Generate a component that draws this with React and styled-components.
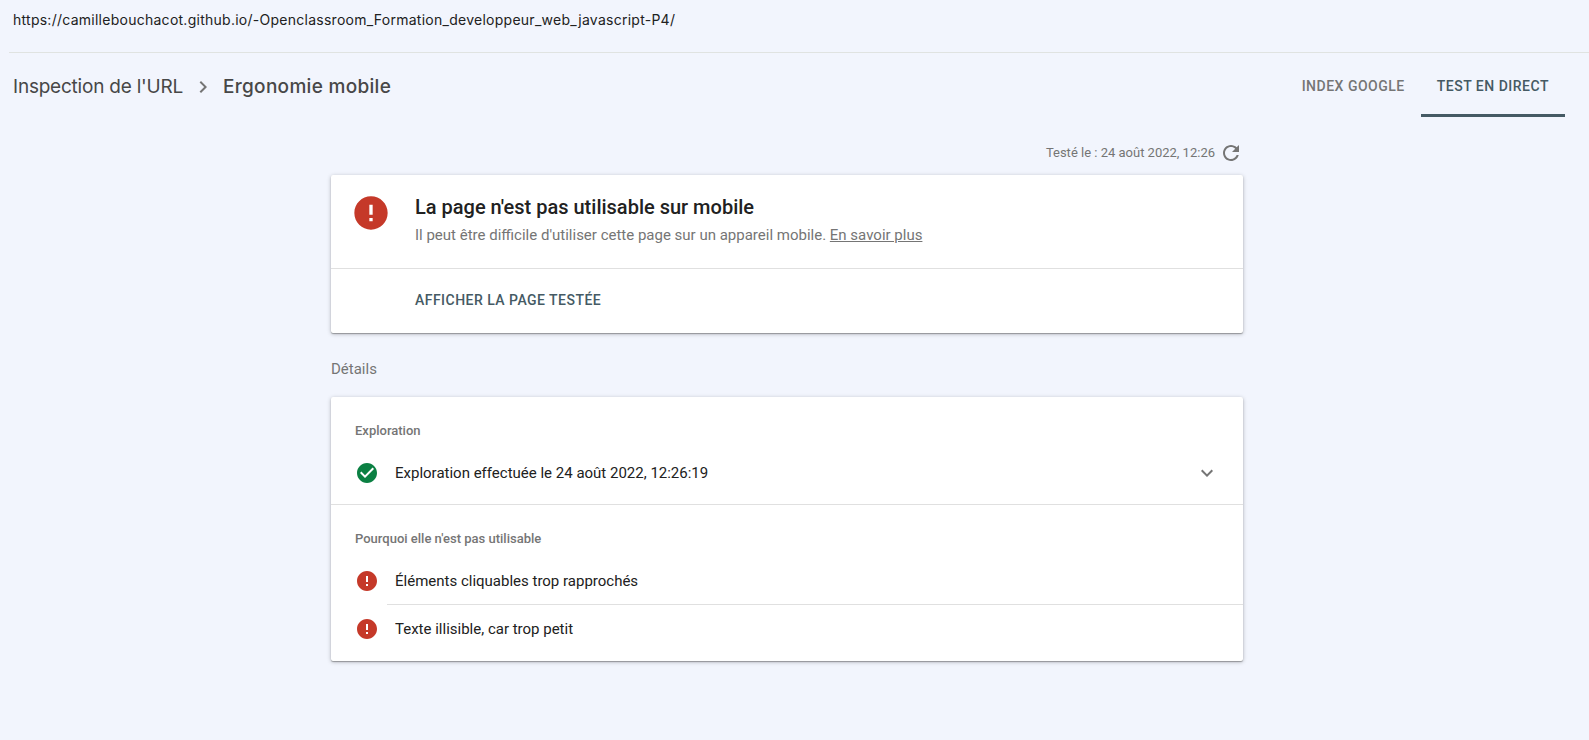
import React from "react";
import styled, { createGlobalStyle } from "styled-components";

const GlobalStyle = createGlobalStyle`
  * { box-sizing: border-box; }
  body {
    margin: 0;
    background: #f2f5fd;
    font-family: Roboto, "Liberation Sans", sans-serif;
    color: #212121;
  }
`;

const Page = styled.div`
  min-height: 740px;
  overflow: hidden;
`;

const UrlBar = styled.header`
  height: 53px;
  margin-left: 9px;
  padding: 10px 4px 0;
  border-bottom: 1px solid #e0e3e1;
  font-family: Inter, Roboto, sans-serif;
  font-size: 14px;
  line-height: 20px;
  letter-spacing: 0.26px;
  white-space: nowrap;
`;

const TitleBar = styled.div`
  display: flex;
  justify-content: space-between;
  height: 64px;
  padding: 0 24px 0 13px;
`;

const Breadcrumb = styled.nav`
  display: flex;
  align-items: center;
  height: 68px;
  gap: 8px;
  font-family: Inter, Roboto, sans-serif;
  font-size: 19px;
  line-height: 24px;
  color: #474747;
  white-space: nowrap;
`;

const Crumb = styled.span`
  font-weight: ${(p) => (p.$current ? 500 : 400)};
  letter-spacing: ${(p) => (p.$current ? 0.3 : -0.22)}px;
  width: ${(p) => (p.$current ? "auto" : "170px")};
`;

const Tabs = styled.div`
  display: flex;
`;

const Tab = styled.button`
  height: 64px;
  padding: 5px 16px 0;
  border: 0;
  border-bottom: 3px solid ${(p) => (p.$active ? "#455a64" : "transparent")};
  background: none;
  color: ${(p) => (p.$active ? "#455a64" : "#757575")};
  font: 500 14px/20px Roboto, sans-serif;
  letter-spacing: 0.5px;
  white-space: nowrap;
`;

const Content = styled.main`
  width: 912px;
  margin-left: 331px;
`;

const TestedAt = styled.div`
  display: flex;
  align-items: center;
  justify-content: flex-end;
  gap: 4px;
  height: 58px;
  padding-top: 14px;
  font-size: 13px;
  line-height: 18px;
  color: #757575;
`;

const Card = styled.section`
  background: #fff;
  border-radius: 2px;
  box-shadow: 0 1px 4px rgba(0, 0, 0, 0.26), 0 1px 1px rgba(0, 0, 0, 0.28);
`;

const Verdict = styled.div`
  display: flex;
  gap: 24px;
  height: 94px;
  padding: 18px 20px 0;
  border-bottom: 1px solid #e0e0e0;
`;

const VerdictTitle = styled.h1`
  margin: 2px 0 2px;
  font-size: 20px;
  font-weight: 500;
  line-height: 24px;
`;

const VerdictText = styled.p`
  margin: 0;
  font-size: 15px;
  line-height: 28px;
  color: #757575;
`;

const Link = styled.a`
  color: inherit;
  text-decoration: underline;
`;

const CardActions = styled.div`
  display: flex;
  align-items: center;
  height: 64px;
  padding: 0 0 2px 84px;
`;

const ActionButton = styled.button`
  padding: 0;
  border: 0;
  background: none;
  color: #455a64;
  font: 500 14px/20px Roboto, sans-serif;
  letter-spacing: 0.47px;
`;

const SectionTitle = styled.h2`
  height: 64px;
  margin: 0;
  padding-top: 26px;
  font-size: 15px;
  font-weight: 400;
  line-height: 20px;
  color: #757575;
`;

const Group = styled.div`
  padding-bottom: ${(p) => p.$bottom}px;
  & + & { border-top: 1px solid #e0e0e0; }
`;

const GroupTitle = styled.h3`
  height: 52px;
  margin: 0;
  padding: 24px 24px 0;
  font-size: 13px;
  font-weight: 500;
  line-height: 20px;
  color: #757575;
`;

const Item = styled.div`
  display: flex;
  align-items: center;
  padding-left: 24px;
`;

const ItemBody = styled.div`
  display: flex;
  flex: 1;
  align-items: center;
  justify-content: space-between;
  height: 48px;
  margin-left: 8px;
  padding: 0 24px 0 8px;
  font-size: 15px;
  ${Item} + ${Item} & { box-shadow: 0 -1px 0 #e0e0e0; }
`;

const Glyph = styled.svg`
  flex: none;
  display: block;
  width: ${(p) => p.$size || 24}px;
  height: ${(p) => p.$size || 24}px;
  fill: ${(p) => p.$color || "#757575"};
`;

const icons = {
  error: "M12 2C6.48 2 2 6.48 2 12s4.48 10 10 10 10-4.48 10-10S17.52 2 12 2zm1 15h-2v-2h2v2zm0-4h-2V7h2v6z",
  check: "M12 2C6.48 2 2 6.48 2 12s4.48 10 10 10 10-4.48 10-10S17.52 2 12 2zm-2 15l-5-5 1.41-1.41L10 14.17l7.59-7.59L19 8l-9 9z",
  refresh: "M17.65 6.35C16.2 4.9 14.21 4 12 4c-4.42 0-7.99 3.58-7.99 8s3.57 8 7.99 8c3.73 0 6.84-2.55 7.73-6h-2.08c-.82 2.33-3.04 4-5.65 4-3.31 0-6-2.69-6-6s2.69-6 6-6c1.66 0 3.14.69 4.22 1.78L13 11h7V4l-2.35 2.35z",
  right: "M10 6L8.59 7.41 13.17 12l-4.58 4.59L10 18l6-6z",
  down: "M16.59 8.59L12 13.17 7.41 8.59 6 10l6 6 6-6z",
};

const Icon = ({ name, size, color }) => (
  <Glyph viewBox="0 0 24 24" $size={size} $color={color} aria-hidden="true">
    <path d={icons[name]} />
  </Glyph>
);

const RED = "#c53929";
const GREEN = "#0b8043";

const issues = ["Éléments cliquables trop rapprochés", "Texte illisible, car trop petit"];

export default function App() {
  return (
    <Page>
      <GlobalStyle />
      <UrlBar>
        https://camillebouchacot.github.io/-Openclassroom_Formation_developpeur_web_javascript-P4/
      </UrlBar>
      <TitleBar>
        <Breadcrumb>
          <Crumb>Inspection de l'URL</Crumb>
          <Icon name="right" />
          <Crumb $current>Ergonomie mobile</Crumb>
        </Breadcrumb>
        <Tabs>
          <Tab>INDEX GOOGLE</Tab>
          <Tab $active>TEST EN DIRECT</Tab>
        </Tabs>
      </TitleBar>
      <Content>
        <TestedAt>
          <span>Testé le : 24 août 2022, 12:26</span>
          <Icon name="refresh" />
        </TestedAt>
        <Card>
          <Verdict>
            <Icon name="error" size={40} color={RED} />
            <div>
              <VerdictTitle>La page n'est pas utilisable sur mobile</VerdictTitle>
              <VerdictText>
                Il peut être difficile d'utiliser cette page sur un appareil mobile. <Link>En savoir plus</Link>
              </VerdictText>
            </div>
          </Verdict>
          <CardActions>
            <ActionButton>AFFICHER LA PAGE TESTÉE</ActionButton>
          </CardActions>
        </Card>
        <SectionTitle>Détails</SectionTitle>
        <Card>
          <Group $bottom={7}>
            <GroupTitle>Exploration</GroupTitle>
            <Item>
              <Icon name="check" color={GREEN} />
              <ItemBody>
                Exploration effectuée le 24 août 2022, 12:26:19
                <Icon name="down" />
              </ItemBody>
            </Item>
          </Group>
          <Group $bottom={8}>
            <GroupTitle>Pourquoi elle n'est pas utilisable</GroupTitle>
            {issues.map((text) => (
              <Item key={text}>
                <Icon name="error" color={RED} />
                <ItemBody>{text}</ItemBody>
              </Item>
            ))}
          </Group>
        </Card>
      </Content>
    </Page>
  );
}
